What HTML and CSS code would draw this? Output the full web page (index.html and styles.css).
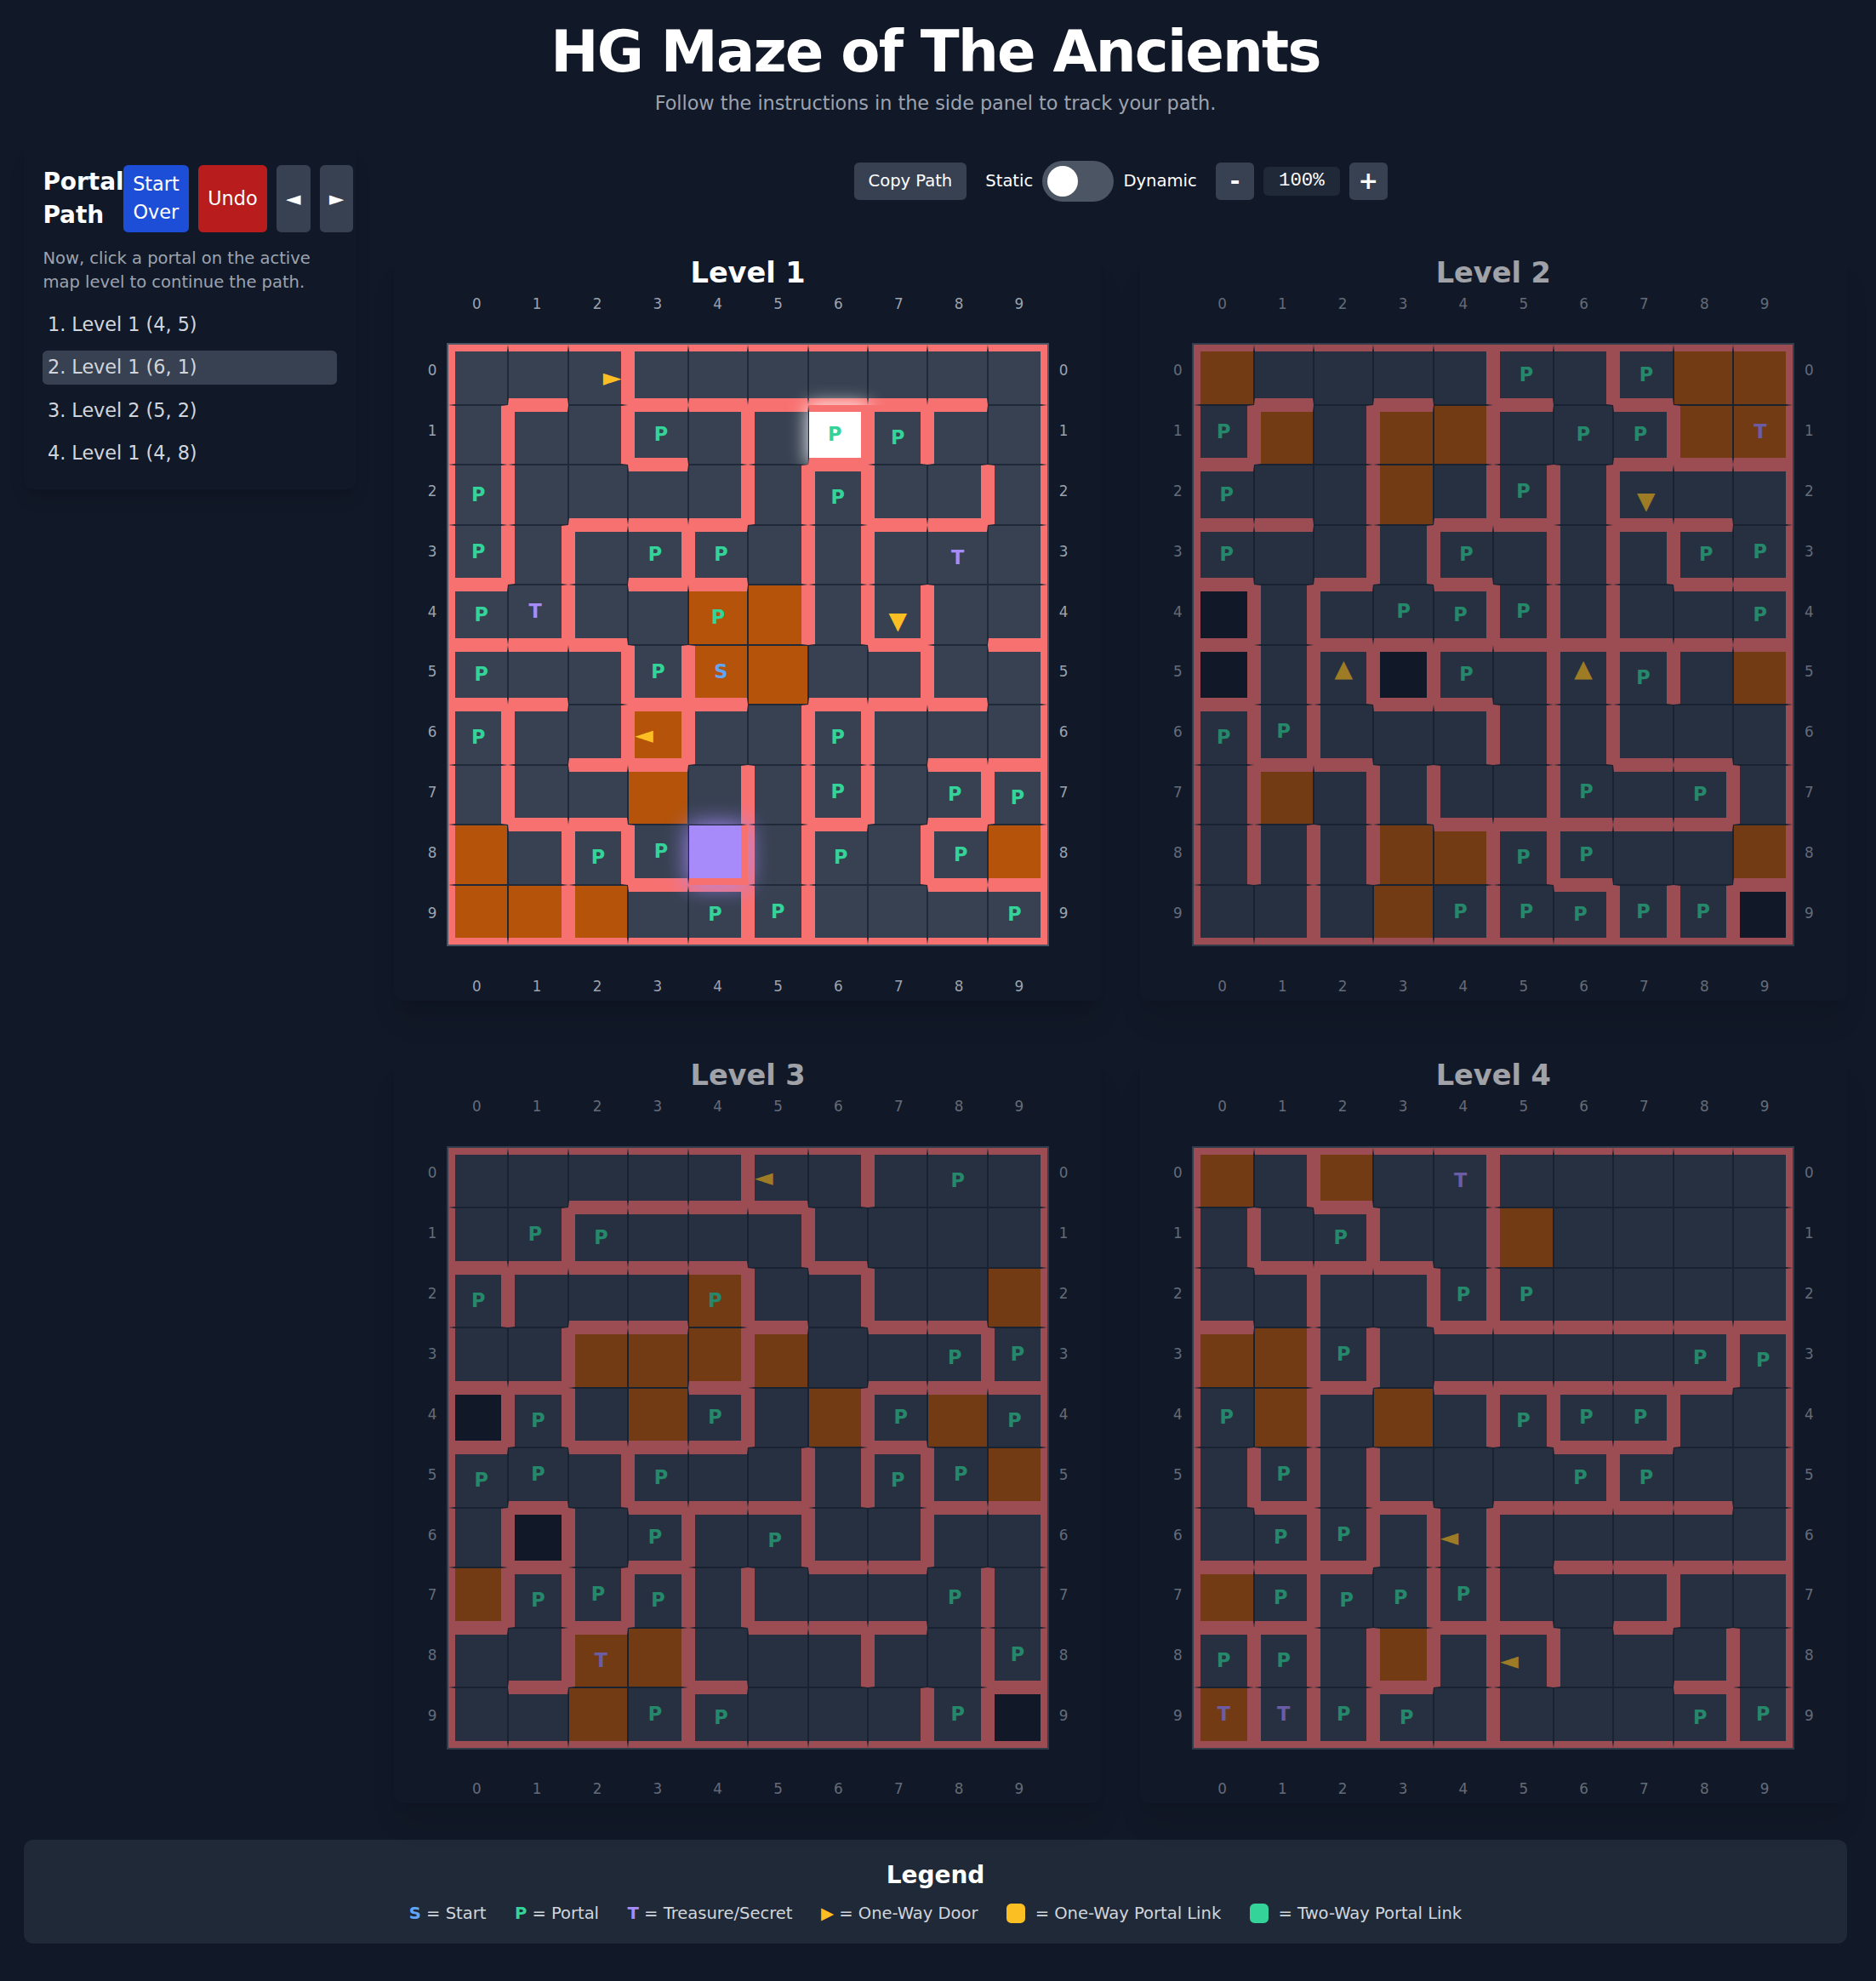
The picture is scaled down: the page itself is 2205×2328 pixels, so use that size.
FILE: index.html
```html
<!DOCTYPE html>
<html lang="en">
<head>
<meta charset="utf-8">
<title>HG Maze of The Ancients</title>
<link rel="stylesheet" href="styles.css">
</head>
<body>
<div class="page">
  <header class="page-header">
    <h1>HG Maze of The Ancients</h1>
    <p>Follow the instructions in the side panel to track your path.</p>
  </header>

  <div class="layout">
    <aside class="side-panel">
      <div class="side-head">
        <h2>Portal Path</h2>
        <div class="side-buttons">
          <button class="btn btn-blue">Start Over</button>
          <button class="btn btn-red">Undo</button>
          <button class="btn btn-gray">◄</button>
          <button class="btn btn-gray">►</button>
        </div>
      </div>
      <p class="hint">Now, click a portal on the active map level to continue the path.</p>
      <ol class="path-list">
        <li>1. Level 1 (4, 5)</li>
        <li class="current">2. Level 1 (6, 1)</li>
        <li>3. Level 2 (5, 2)</li>
        <li>4. Level 1 (4, 8)</li>
      </ol>
    </aside>

    <main class="main">
      <div class="controls">
        <button class="copy-btn">Copy Path</button>
        <div class="toggle-group">
          <span>Static</span>
          <span class="switch"><span class="knob"></span></span>
          <span>Dynamic</span>
        </div>
        <div class="zoom-group">
          <button class="zoom-btn">-</button>
          <span class="zoom-value">100%</span>
          <button class="zoom-btn">+</button>
        </div>
      </div>
      <div class="levels" id="levels"></div>
    </main>
  </div>

  <footer class="legend">
    <h3>Legend</h3>
    <div class="legend-row">
      <div><b class="sym-S">S</b> = Start</div>
      <div><b class="sym-P">P</b> = Portal</div>
      <div><b class="sym-T">T</b> = Treasure/Secret</div>
      <div><b class="door-color">▶</b> = One-Way Door</div>
      <div class="link-item"><i class="swatch one-way"></i>= One-Way Portal Link</div>
      <div class="link-item"><i class="swatch two-way"></i>= Two-Way Portal Link</div>
    </div>
  </footer>
</div>
<script src="maze.js"></script>
</body>
</html>
```
FILE: styles.css
```css
* { box-sizing: border-box; margin: 0; padding: 0; }

html { zoom: 1.4; background: #111827; }

body {
  background: #111827;
  color: #fff;
  font-family: "DejaVu Sans", sans-serif;
  font-size: 16px;
  line-height: 24px;
  letter-spacing: -.03px;
  overflow: hidden;
}

.page { width: 1570.7px; padding: 20.2px 20px; }

.page-header { text-align: center; }
.page-header h1 { font-size: 48px; line-height: 48px; font-weight: 700; letter-spacing: -.026em; }
.page-header p { margin-top: 6.7px; color: #9ca3af; }

.layout { display: flex; gap: 32px; margin-top: 23.8px; align-items: flex-start; }

.side-panel {
  flex: 0 0 279px;
  min-width: 0;
  padding: 16px;
  border-radius: 8px;
  box-shadow: 0 10px 15px -3px rgba(0, 0, 0, .1), 0 4px 6px -4px rgba(0, 0, 0, .1);
}
.side-head { display: flex; }
.side-head h2 { font-size: 20px; line-height: 28px; font-weight: 700; width: 67.5px; flex: none; }
.side-buttons { display: flex; gap: 8px; flex: none; }

button { border: 0; color: #fff; font: inherit; border-radius: 4px; letter-spacing: inherit; }
.btn { padding: 4px 8px; }
.btn-blue { background: #1d4ed8; width: 55px; padding: 4px; }
.btn-red { background: #b91c1c; }
.btn-gray { background: #374151; }

.hint { margin-top: 12.2px; font-size: 14px; line-height: 20px; color: #9ca3af; }
.path-list { list-style: none; margin-top: 11.7px; display: flex; flex-direction: column; gap: 8px; color: #d1d5db; }
.path-list li { padding: 2px 4px; border-radius: 4px; height: 28px; }
.path-list .current { background: #374151; }

.main { flex: 1; min-width: 0; }
.controls {
  display: flex;
  justify-content: center;
  align-items: center;
  gap: 16px;
  margin-top: 12.4px;
  height: 34px;
  font-size: 14px;
  line-height: 20px;
}
.copy-btn { background: #374151; padding: 6px 12px; }
.toggle-group, .zoom-group { display: flex; align-items: center; gap: 8px; }
.switch { width: 60px; height: 34px; border-radius: 34px; background: #4b5563; padding: 4px; }
.knob { display: block; width: 26px; height: 26px; border-radius: 50%; background: #fff; }
.zoom-btn { width: 32px; height: 32px; background: #374151; font-size: 20px; line-height: 28px; font-weight: 700; }
.zoom-value {
  width: 64px;
  background: #1f2937;
  border-radius: 4px;
  text-align: center;
  font-family: "Liberation Mono", monospace;
  font-size: 16px;
  line-height: 24px;
}

.levels { display: grid; grid-template-columns: 1fr 1fr; gap: 47.3px 32px; margin-top: 44.4px; }

.level {
  display: flex;
  flex-direction: column;
  align-items: center;
  height: 626.5px;
  border-radius: 8px;
  box-shadow: 0 20px 25px -5px rgba(0, 0, 0, .1), 0 8px 10px -6px rgba(0, 0, 0, .1);
}
.level.inactive { opacity: .6; }
.level h2 { font-size: 24px; line-height: 32px; font-weight: 700; }

.col-labels, .row-labels { display: flex; color: #9ca3af; font-size: 12px; line-height: 16px; }
.col-labels { width: 506px; padding-top: 1.7px; height: 42.6px; }
.col-labels.bottom { padding-top: 25.5px; }
.col-labels span { flex: 1; text-align: center; }
.board-row { display: flex; }
.row-labels { flex-direction: column; width: 24px; height: 506px; margin-top: -2.4px; }
.row-labels span { flex: 1; display: flex; align-items: center; justify-content: center; }

.board {
  width: 506px;
  height: 506.4px;
  border: 2px solid #4b5563;
  display: grid;
  grid-template: repeat(10, 1fr) / repeat(10, 1fr);
}

.cell {
  position: relative;
  display: flex;
  align-items: center;
  justify-content: center;
  min-width: 0;
  min-height: 0;
  background: #374151;
  border: 1px solid #1f2937;
  font-weight: 700;
}
.wall-t { border-top: 6px solid #f87171; }
.wall-r { border-right: 6px solid #f87171; }
.wall-b { border-bottom: 6px solid #f87171; }
.wall-l { border-left: 6px solid #f87171; }

.room { background: #b45309; }
.void { background: #111827; }
.selected { background: #fff; box-shadow: 0 0 15px #fff; }
.latest { background: #a78bfa; box-shadow: 0 0 20px #a78bfa; z-index: 2; }

.sym-S { color: #60a5fa; }
.sym-P { color: #34d399; }
.sym-T { color: #a78bfa; }
.door-color, .door { color: #fbbf24; }

/* one-way door arrows hug the wall they open through */
.door { position: absolute; font-size: 20px; line-height: 24px; }
.door-right { right: 0; }
.door-left { left: 0; }
.door-down { bottom: 2px; }
.door-up { top: 2.3px; }

.legend {
  margin-top: 30.4px;
  padding: 16px;
  height: 87px;
  border-radius: 8px;
  background: #1f2937;
  text-align: center;
  font-size: 14px;
  line-height: 20px;
  color: #d1d5db;
}
.legend h3 { font-size: 20px; line-height: 28px; color: #fff; }
.legend-row { display: flex; justify-content: center; gap: 24px; margin-top: 8px; }
.link-item { display: flex; align-items: center; }
.swatch { width: 16px; height: 16px; border-radius: 4px; margin-right: 8px; }
.one-way { background: #fbbf24; }
.two-way { background: #34d399; }
```
FILE: maze.js
```js
// Per level: `v` has one string per row (walls at inner column lines 1-9),
// `h` has one string per inner row line 1-9, `fill` marks rooms (#) and voids (x),
// `sym` holds the letters and one-way doors.
const LEVELS = [
  {
    v: ["001000000", "101010110", "100011101", "110101100", "010001110", "001100010", "101101100", "100011101", "011011010", "010011000"],
    h: ["0101111110", "0001001000", "0011100110", "1001100000", "1110000101", "1101101110", "0011000011", "0110001010", "0001100011"],
    fill: ["..........", "......s...", "..........", "..........", "....##....", "....##....", "...#......", "...#......", "#...l....#", "###......."],
    sym: ["..>.......", "...P..PP..", "P.....P...", "P..PP...T.", "PT..P..v..", "P..PS.....", "P..<..P...", "......P.PP", "..PP..P.P.", "....PP...P"]
  },
  {
    v: ["000010100", "101010010", "001011100", "001101110", "110011100", "111101110", "110011100", "101101001", "111011000", "010010111"],
    h: ["0101010100", "1000000111", "1100110110", "1010100011", "1011111111", "1001100000", "0110000110", "0000111110", "0000001001"],
    fill: ["#.......##", ".#.##...##", "...#......", "..........", "x.........", "x..x.....#", "..........", ".#........", "...##....#", "...#.....x"],
    sym: [".....P.P..", "P.....PP.T", "P....P.v..", "P...P...PP", "...PPP...P", "..^.P.^P..", "PP........", "......P.P.", ".....PP...", "....PPPPP."]
  },
  {
    v: ["000010100", "010001000", "100010100", "010010001", "110010100", "001001110", "110101010", "111110001", "010100101", "000100011"],
    h: ["0011110000", "1111101000", "0011010110", "1100100111", "1011100100", "0101110011", "0101001100", "1010011100", "0100100001"],
    fill: ["..........", "..........", "....#....#", "..####....", "x..#..#.#.", ".........#", ".x........", "#.........", "..##......", "..#......x"],
    sym: [".....<..P.", ".PP.......", "P...P.....", "........PP", ".P..P..P.P", "PP.P...PP.", "...P.P....", ".PPP....P.", "..T......P", "...PP...P."]
  },
  {
    v: ["010010000", "101010000", "010110000", "011000001", "010011010", "111000100", "011110000", "010110010", "111111001", "111010001"],
    h: ["0010000000", "0111000000", "1000111111", "0010111110", "0000001100", "0101011110", "1110001111", "1100110100", "0001000010"],
    fill: ["#.#.......", ".....#....", "..........", "##........", ".#.#......", "..........", "..........", "#.........", "...#......", "#........."],
    sym: ["....T.....", "..P.......", "....PP....", "..P.....PP", "P....PPP..", ".P....PP..", ".PP.<.....", ".PPPP.....", "PP...<....", "TTPP....PP"]
  }
];

const FILLS = { "#": "room", x: "void", s: "selected", l: "latest" };
const DOORS = { ">": ["right", "►"], "<": ["left", "◄"], v: ["down", "▼"], "^": ["up", "▲"] };
const digits = [...Array(10).keys()].map(n => `<span>${n}</span>`).join("");

function cell(level, r, c) {
  const cls = ["cell"];
  if (r === 0 || level.h[r - 1][c] === "1") cls.push("wall-t");
  if (c === 9 || level.v[r][c] === "1") cls.push("wall-r");
  if (r === 9 || level.h[r][c] === "1") cls.push("wall-b");
  if (c === 0 || level.v[r][c - 1] === "1") cls.push("wall-l");
  if (FILLS[level.fill[r][c]]) cls.push(FILLS[level.fill[r][c]]);
  const s = level.sym[r][c];
  let inner = "";
  if (DOORS[s]) inner = `<span class="door door-${DOORS[s][0]}">${DOORS[s][1]}</span>`;
  else if (s !== ".") inner = `<span class="sym-${s}">${s}</span>`;
  return `<div class="${cls.join(" ")}">${inner}</div>`;
}

document.getElementById("levels").innerHTML = LEVELS.map((level, i) => {
  let cells = "";
  for (let r = 0; r < 10; r++) for (let c = 0; c < 10; c++) cells += cell(level, r, c);
  return `<section class="level${i ? " inactive" : ""}">
    <h2>Level ${i + 1}</h2>
    <div class="col-labels">${digits}</div>
    <div class="board-row">
      <div class="row-labels">${digits}</div>
      <div class="board">${cells}</div>
      <div class="row-labels">${digits}</div>
    </div>
    <div class="col-labels bottom">${digits}</div>
  </section>`;
}).join("");
```
